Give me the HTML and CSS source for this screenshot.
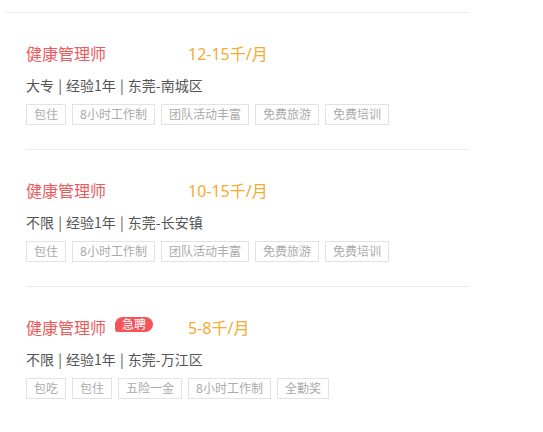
FILE: index.html
```html
<!DOCTYPE html>
<html lang="zh-CN">

<head>
    <meta charset="UTF-8">
    <meta name="viewport" content="width=device-width, initial-scale=1.0">
    <title>职位列表</title>
    <link rel="stylesheet" href="styles.css">
</head>

<body>
    <div class="job-list">

        <div class="job">
            <div class="job-head">
                <div class="job-name">健康管理师</div>
                <div class="job-salary">12-15千/月</div>
            </div>
            <div class="job-info">大专 | 经验1年 | 东莞-南城区</div>
            <div class="job-tags">
                <span class="tag">包住</span>
                <span class="tag">8小时工作制</span>
                <span class="tag">团队活动丰富</span>
                <span class="tag">免费旅游</span>
                <span class="tag">免费培训</span>
            </div>
        </div>

        <div class="job">
            <div class="job-head">
                <div class="job-name">健康管理师</div>
                <div class="job-salary">10-15千/月</div>
            </div>
            <div class="job-info">不限 | 经验1年 | 东莞-长安镇</div>
            <div class="job-tags">
                <span class="tag">包住</span>
                <span class="tag">8小时工作制</span>
                <span class="tag">团队活动丰富</span>
                <span class="tag">免费旅游</span>
                <span class="tag">免费培训</span>
            </div>
        </div>

        <div class="job last">
            <div class="job-head">
                <div class="job-name">健康管理师<span class="urgent">急聘</span></div>
                <div class="job-salary">5-8千/月</div>
            </div>
            <div class="job-info">不限 | 经验1年 | 东莞-万江区</div>
            <div class="job-tags">
                <span class="tag">包吃</span>
                <span class="tag">包住</span>
                <span class="tag">五险一金</span>
                <span class="tag">8小时工作制</span>
                <span class="tag">全勤奖</span>
            </div>
        </div>

    </div>
</body>

</html>
```

FILE: styles.css
```css
body {
    margin: 0;
    background-color: #fff;
    font-family: "Noto Sans", "Noto Sans CJK SC", sans-serif;
}

.job-list {
    width: 463px;
    margin: 12px 0 0 6px;
    border-top: 1px solid #ebebeb;
}

.job {
    margin-left: 20px;
    padding: 28px 0 24px;
    border-bottom: 1px solid #ebebeb;
}

.job.last {
    border-bottom: none;
}

.job-head {
    display: flex;
    align-items: center;
    height: 24px;
}

.job-name {
    width: 162px;
    display: flex;
    align-items: center;
    font-size: 16px;
    color: #ea5a5d;
}

.job-salary {
    font-size: 16px;
    color: #f3ab30;
}

.urgent {
    margin: 0 0 6px 9px;
    padding: 0 7px;
    height: 15px;
    line-height: 15px;
    font-size: 12px;
    color: #fff;
    background-color: #f4555a;
    border-radius: 8px 8px 8px 3px;
}

.job-info {
    margin-top: 10px;
    line-height: 20px;
    font-family: "Noto Sans CJK SC", sans-serif;
    font-size: 14px;
    word-spacing: 1px;
    color: #555;
}

.job-tags {
    display: flex;
    gap: 6px;
    margin-top: 9px;
}

.tag {
    padding: 0 7px;
    line-height: 19px;
    font-size: 12px;
    color: #aaa;
    border: 1px solid #e2e2e2;
}
```
